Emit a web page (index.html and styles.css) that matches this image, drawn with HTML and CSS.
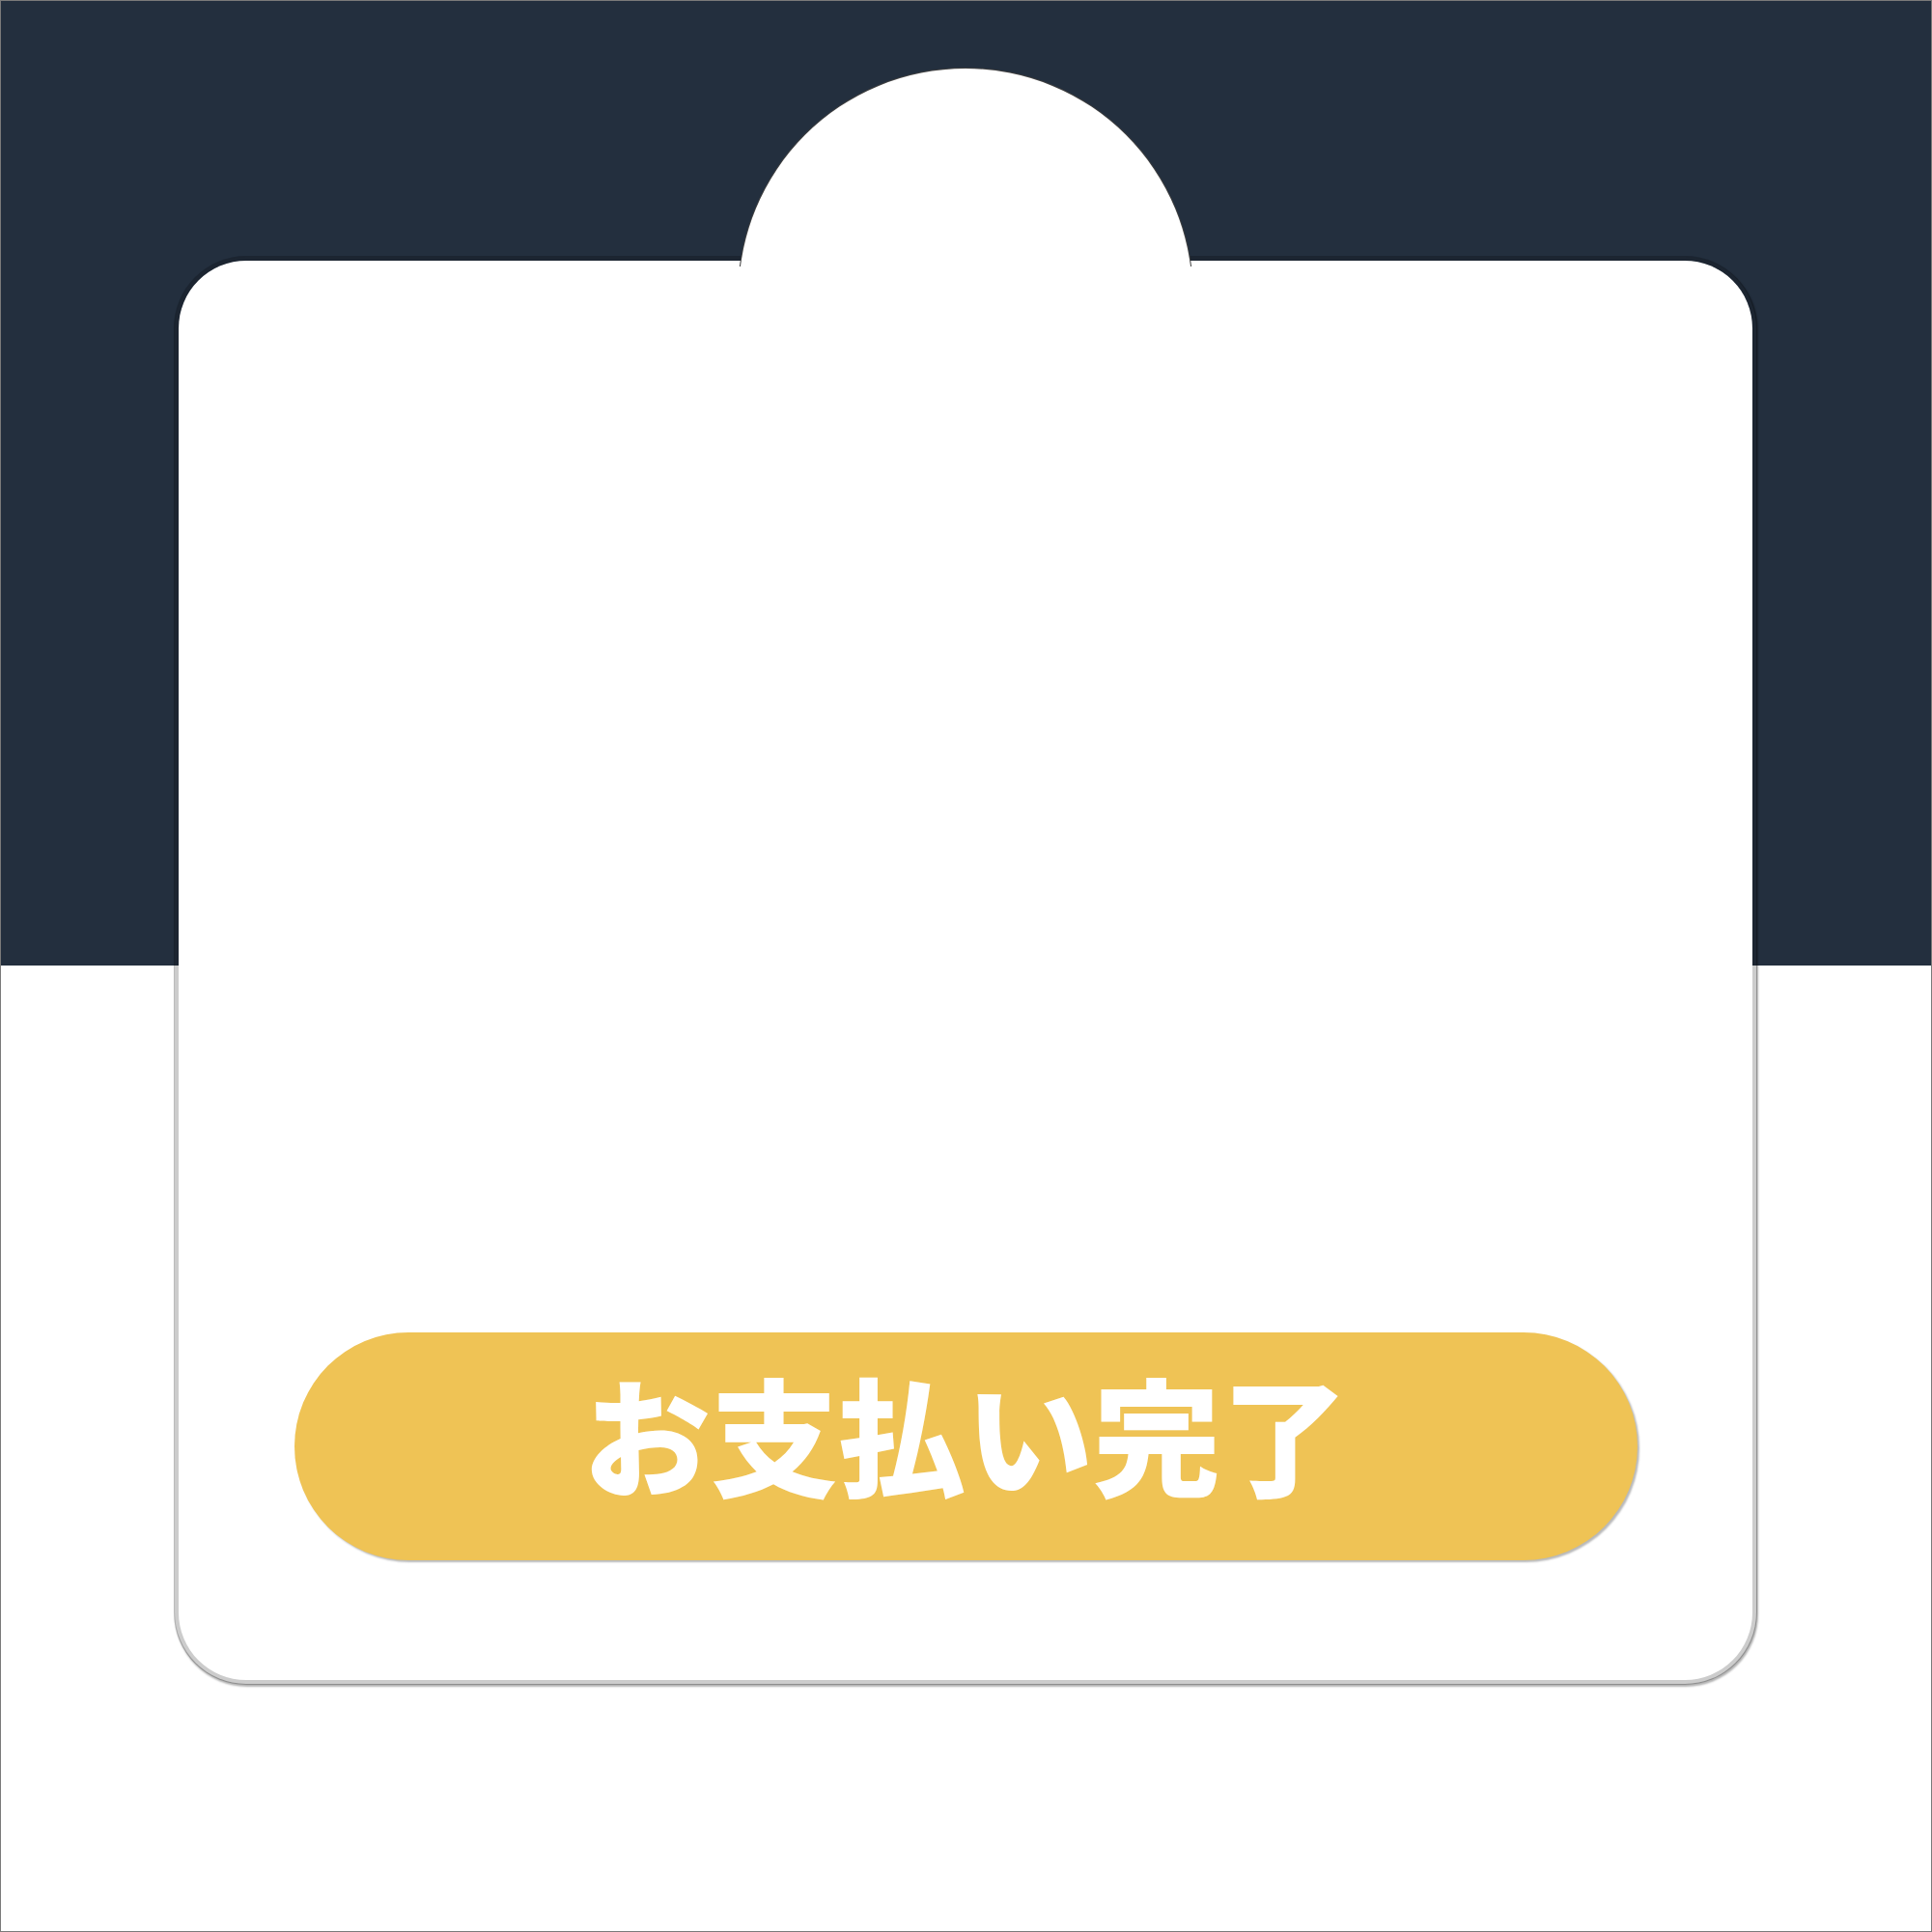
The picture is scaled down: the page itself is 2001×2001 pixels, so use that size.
FILE: index.html
```html
<!DOCTYPE html>
<html lang="ja">
<head>
<meta charset="utf-8">
<title>お支払い完了</title>
<link rel="stylesheet" href="styles.css">
</head>
<body>
<div class="stage">
  <div class="band"></div>
  <div class="card">
    <div class="cap"><div class="cap-circle"></div></div>
    <div class="card-body">
      <button class="pay-btn" type="button">お支払い完了</button>
    </div>
  </div>
</div>
</body>
</html>
```
FILE: styles.css
```css
html, body {
  margin: 0;
  padding: 0;
  background: #ffffff;
}
body {
  width: 2001px;
  height: 2001px;
  box-sizing: border-box;
  border: 1px solid #7a7a7a;
  overflow: hidden;
}
.stage {
  display: grid;
  width: 100%;
  height: 100%;
}
.band, .card {
  grid-area: 1 / 1;
}
.band {
  height: 999px;
  background: #232f3e;
}
.card {
  position: relative;
  justify-self: center;
  align-self: start;
  margin-top: 264px;
  margin-left: -2px;
  width: 1630px;
  height: 1470px;
  background: #ffffff;
  background-clip: padding-box;
  border: 5px solid rgba(0, 0, 0, 0.2);
  border-radius: 75px;
  box-shadow: 1px 2px 2px rgba(0, 0, 0, 0.3);
}
.cap {
  position: absolute;
  top: -200px;
  left: 50%;
  margin-left: -236px;
  width: 472px;
  height: 206px;
  overflow: hidden;
}
.cap-circle {
  width: 470px;
  height: 470px;
  border-radius: 50%;
  background: #ffffff;
  border: 1px solid rgba(0, 0, 0, 0.75);
}
.card-body {
  display: flex;
  flex-direction: column;
  justify-content: flex-end;
  height: 100%;
  box-sizing: border-box;
  padding: 0 119px 124px 120px;
}
.pay-btn {
  display: flex;
  align-items: center;
  justify-content: center;
  width: 100%;
  height: 236px;
  margin: 0;
  padding: 0 0 30px 0;
  border: none;
  border-radius: 118px;
  background: #efc355;
  box-shadow: 2px 2px 2px rgba(0, 0, 0, 0.28);
  color: #ffffff;
  font-family: "Noto Sans CJK JP", "Noto Sans", sans-serif;
  font-weight: 900;
  font-size: 132px;
  line-height: 1;
  letter-spacing: 0;
}
```
